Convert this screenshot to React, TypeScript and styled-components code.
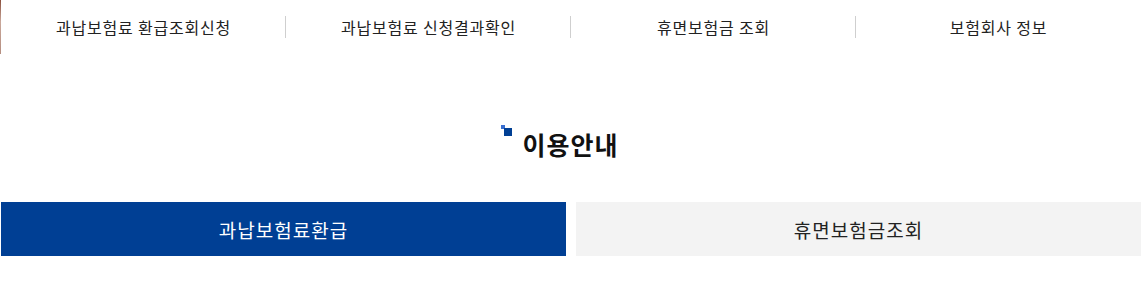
import styled, { createGlobalStyle } from "styled-components";

const GlobalStyle = createGlobalStyle`
  * { box-sizing: border-box; }
  body {
    margin: 0;
    background: #fff;
    font-family: "Noto Sans CJK KR", "Noto Sans", sans-serif;
    color: #222;
  }
`;

const Page = styled.div`
  width: 1141px;
`;

const TopBar = styled.div`
  display: flex;
  height: 54px;
`;

const EdgeStrip = styled.div`
  width: 1px;
  height: 54px;
  background: linear-gradient(#8a4f3c, #c9a79a 40%, #b58e80);
`;

const NavList = styled.ul`
  flex: 1;
  display: flex;
  margin: 0;
  padding: 0;
  list-style: none;
`;

const NavItem = styled.li<{ $last?: boolean }>`
  flex: 1;
  display: flex;
  align-items: center;
  justify-content: center;
  position: relative;
  font-size: 16px;
  letter-spacing: 0.8px;
  color: #222;
  &::after {
    content: "";
    display: ${({ $last }) => ($last ? "none" : "block")};
    position: absolute;
    right: 0;
    top: 16px;
    width: 1px;
    height: 22px;
    background: #cfcfcf;
  }
`;

const TitleWrap = styled.div`
  display: flex;
  justify-content: center;
  padding-top: 71px;
`;

const Title = styled.h2`
  position: relative;
  margin: 0;
  font-size: 25px;
  font-weight: 700;
  letter-spacing: 1px;
  line-height: 38px;
  color: #111;
`;

const TitleMark = styled.span`
  position: absolute;
  left: -21px;
  top: 0;
  width: 12px;
  height: 12px;
  &::before {
    content: "";
    position: absolute;
    left: 0;
    top: 0;
    width: 4px;
    height: 4px;
    background: #3a6fd0;
  }
  &::after {
    content: "";
    position: absolute;
    left: 3px;
    top: 3px;
    width: 8px;
    height: 8px;
    background: #003f94;
  }
`;

const Tabs = styled.div`
  display: flex;
  gap: 10px;
  margin-top: 39px;
  padding-left: 1px;
`;

const Tab = styled.button<{ $active?: boolean }>`
  flex: 1;
  height: 54px;
  border: 0;
  padding: 0;
  font-family: inherit;
  font-size: 19px;
  letter-spacing: 1px;
  background: ${({ $active }) => ($active ? "#003f94" : "#f3f3f3")};
  color: ${({ $active }) => ($active ? "#fff" : "#222")};
  cursor: pointer;
`;

const navItems = [
  "과납보험료 환급조회신청",
  "과납보험료 신청결과확인",
  "휴면보험금 조회",
  "보험회사 정보",
];

export default function App() {
  return (
    <Page>
      <GlobalStyle />
      <TopBar>
        <EdgeStrip />
        <NavList>
          {navItems.map((item, i) => (
            <NavItem key={item} $last={i === navItems.length - 1}>
              {item}
            </NavItem>
          ))}
        </NavList>
      </TopBar>
      <TitleWrap>
        <Title>
          <TitleMark />
          이용안내
        </Title>
      </TitleWrap>
      <Tabs>
        <Tab $active>과납보험료환급</Tab>
        <Tab>휴면보험금조회</Tab>
      </Tabs>
    </Page>
  );
}
